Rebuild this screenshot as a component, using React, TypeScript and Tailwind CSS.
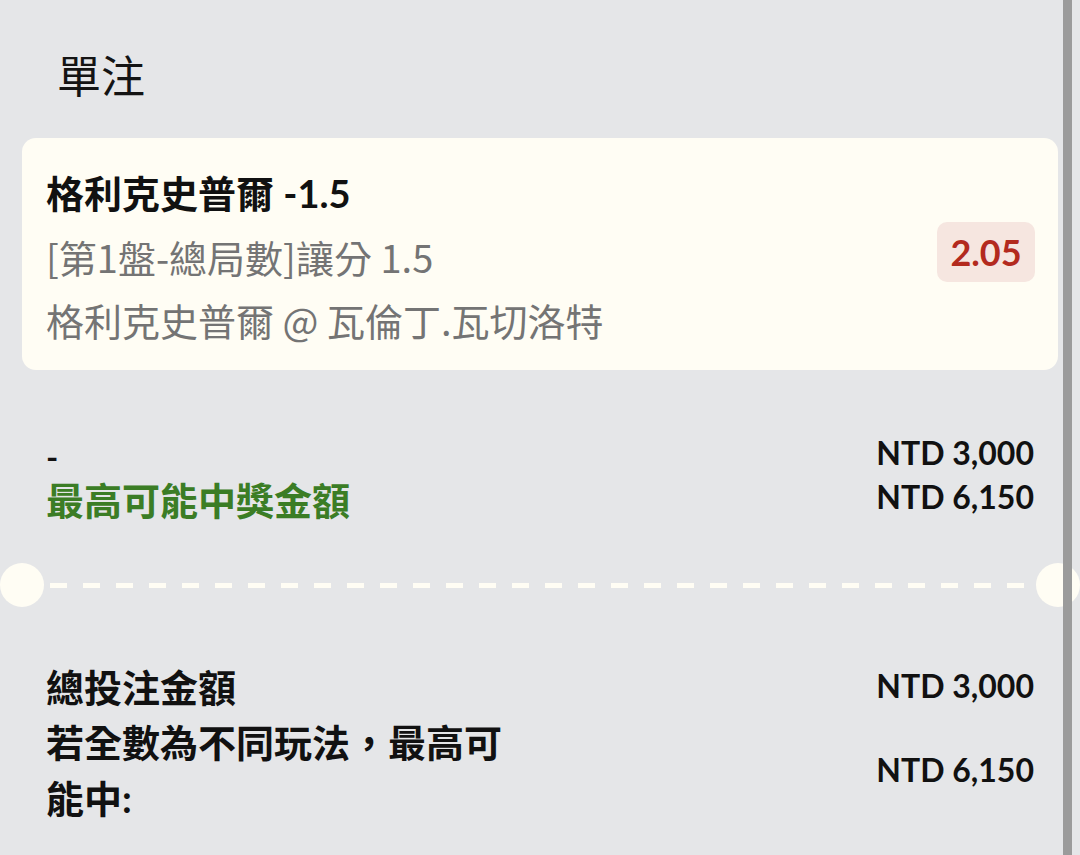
import React from 'react';

const font = "font-['Lato','Noto_Sans_CJK_TC',sans-serif]";

const SingleBet: React.FC = () => {
  return (
    <div className={`relative w-[1080px] h-[855px] overflow-hidden bg-[#e5e6e8] ${font}`}>
      {/* Header */}
      <div className="pl-[57px] pt-[47px] h-[138px]">
        <h2 className="text-[44px] leading-[54px] text-[#141414] font-['Noto_Sans_CJK_TC',sans-serif]">單注</h2>
      </div>

      {/* Bet card */}
      <div className="mx-[22px] rounded-[14px] bg-[#fffdf4] pl-[24px] pr-[23px] pt-[22px] pb-[18px] flex items-center justify-between">
        <div className="flex flex-col">
          <div className="text-[38px] leading-[64px] font-bold text-[#111]">
            <span className="font-['Noto_Sans_CJK_TC',sans-serif]">格利克史普爾</span> -1.5
          </div>
          <div className="text-[38px] leading-[63px] text-[#747474] font-['Noto_Sans_CJK_TC',sans-serif]">[第1盤-總局數]讓分 1.5</div>
          <div className="text-[38px] leading-[64px] text-[#747474] font-['Noto_Sans_CJK_TC',sans-serif]">格利克史普爾 @ 瓦倫丁.瓦切洛特</div>
        </div>
        <div className="rounded-[10px] bg-[#f6e6e0] w-[98px] h-[60px] flex items-center justify-center text-[36px] font-bold text-[#b32a1e] -mt-[8px]">
          2.05
        </div>
      </div>

      {/* Stake rows */}
      <div className="mt-[61px] px-[46px]">
        <div className="flex justify-between items-center h-[44px]">
          <span className="text-[30px] leading-[30px] font-bold text-[#111] pt-[8px] scale-x-110 origin-left">-</span>
          <span className="text-[32px] font-bold text-[#111]">NTD 3,000</span>
        </div>
        <div className="flex justify-between items-center h-[44px]">
          <span className="text-[38px] leading-[38px] font-bold text-[#3b7d25] pt-[6px]">最高可能中獎金額</span>
          <span className="text-[32px] font-bold text-[#111]">NTD 6,150</span>
        </div>
      </div>

      {/* Divider */}
      <div className="mt-[44px] flex items-center gap-[6px]">
        <div className="w-[44px] h-[44px] rounded-full bg-[#fffdf4] shrink-0"></div>
        <div className="flex-1 h-[5px] bg-[repeating-linear-gradient(90deg,#fffdf4_0_17px,transparent_17px_33px)]"></div>
        <div className="w-[44px] h-[44px] rounded-full bg-[#fffdf4] shrink-0"></div>
      </div>

      {/* Totals */}
      <div className="mt-[51px] px-[46px] flex justify-between">
        <div className="w-[470px] text-[38px] leading-[56px] font-bold text-[#111]">
          <div className="font-['Noto_Sans_CJK_TC',sans-serif]">總投注金額</div>
          <div>若全數為不同玩法，最高可能中:</div>
        </div>
        <div className="flex flex-col items-end text-[32px] font-bold text-[#111]">
          <div className="h-[56px] flex items-center">NTD 3,000</div>
          <div className="h-[80px] flex items-end">NTD 6,150</div>
        </div>
      </div>

      {/* Scrollbar */}
      <div className="absolute top-0 bottom-0 right-[8px] w-[9px] bg-[#9b9b9b]"></div>
    </div>
  );
};

export default function App() {
  return <SingleBet />;
}
